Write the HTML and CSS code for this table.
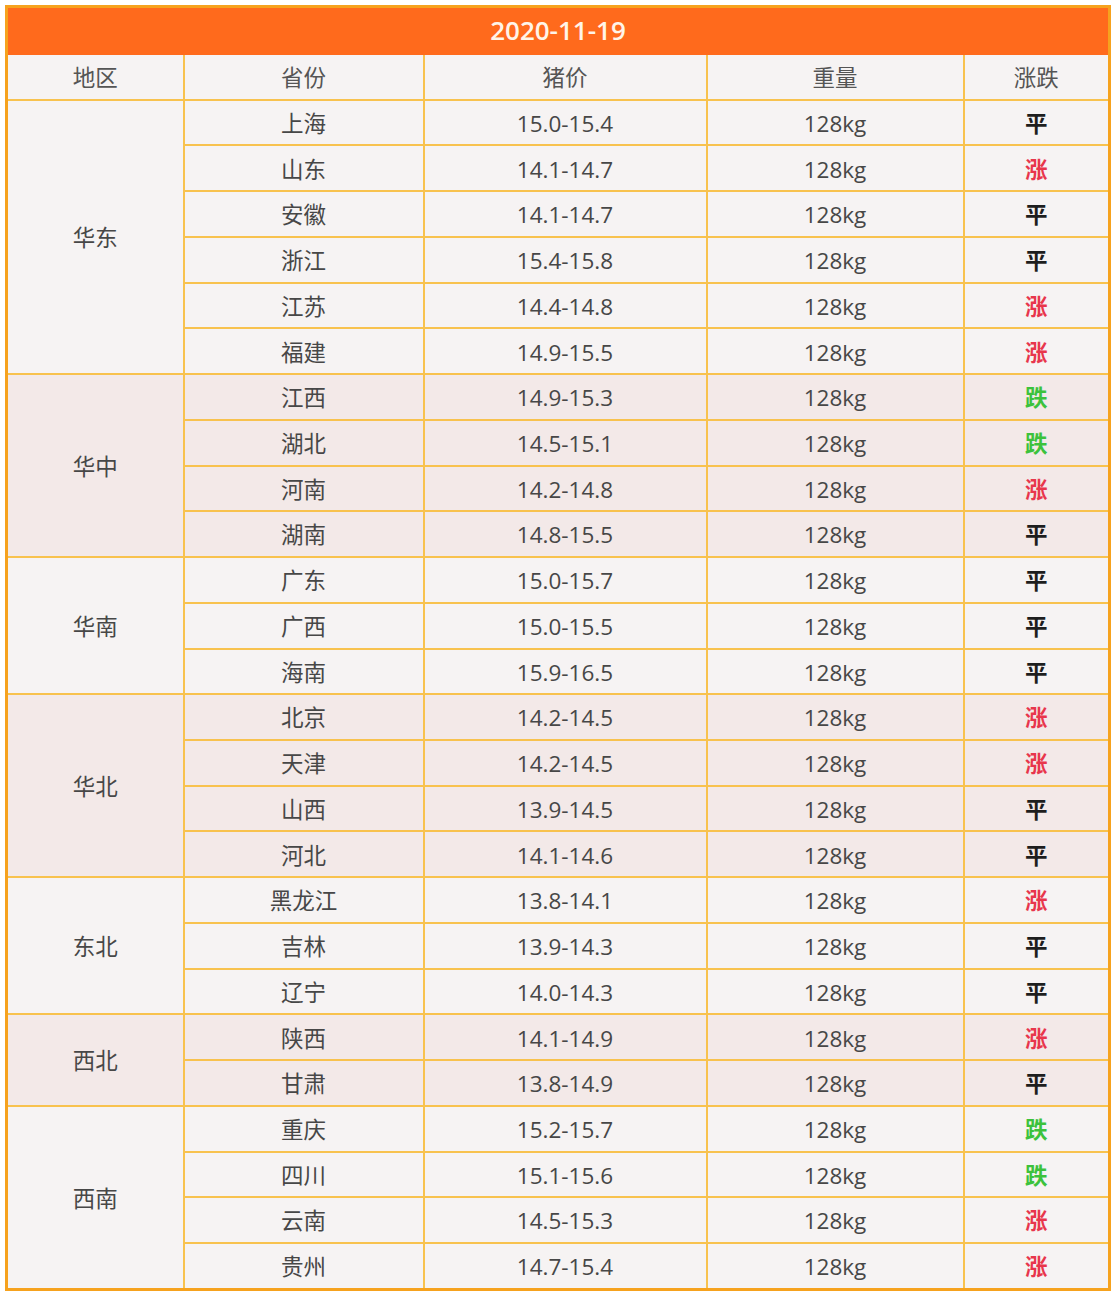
FILE: index.html
```html
<!DOCTYPE html>
<html lang="zh">
<head>
<meta charset="utf-8">
<link rel="stylesheet" href="styles.css">
</head>
<body>
<table class="price">
  <colgroup>
    <col class="c1"><col class="c2"><col class="c3"><col class="c4"><col class="c5">
  </colgroup>
  <thead>
    <tr class="title"><th colspan="5">2020-11-19</th></tr>
    <tr class="head"><th>地区</th><th>省份</th><th>猪价</th><th>重量</th><th>涨跌</th></tr>
  </thead>
  <tbody class="g-light">
    <tr><td rowspan="6">华东</td><td>上海</td><td>15.0-15.4</td><td>128kg</td><td class="flat">平</td></tr>
    <tr><td>山东</td><td>14.1-14.7</td><td>128kg</td><td class="up">涨</td></tr>
    <tr><td>安徽</td><td>14.1-14.7</td><td>128kg</td><td class="flat">平</td></tr>
    <tr><td>浙江</td><td>15.4-15.8</td><td>128kg</td><td class="flat">平</td></tr>
    <tr><td>江苏</td><td>14.4-14.8</td><td>128kg</td><td class="up">涨</td></tr>
    <tr><td>福建</td><td>14.9-15.5</td><td>128kg</td><td class="up">涨</td></tr>
  </tbody>
  <tbody class="g-pink">
    <tr><td rowspan="4">华中</td><td>江西</td><td>14.9-15.3</td><td>128kg</td><td class="down">跌</td></tr>
    <tr><td>湖北</td><td>14.5-15.1</td><td>128kg</td><td class="down">跌</td></tr>
    <tr><td>河南</td><td>14.2-14.8</td><td>128kg</td><td class="up">涨</td></tr>
    <tr><td>湖南</td><td>14.8-15.5</td><td>128kg</td><td class="flat">平</td></tr>
  </tbody>
  <tbody class="g-light">
    <tr><td rowspan="3">华南</td><td>广东</td><td>15.0-15.7</td><td>128kg</td><td class="flat">平</td></tr>
    <tr><td>广西</td><td>15.0-15.5</td><td>128kg</td><td class="flat">平</td></tr>
    <tr><td>海南</td><td>15.9-16.5</td><td>128kg</td><td class="flat">平</td></tr>
  </tbody>
  <tbody class="g-pink">
    <tr><td rowspan="4">华北</td><td>北京</td><td>14.2-14.5</td><td>128kg</td><td class="up">涨</td></tr>
    <tr><td>天津</td><td>14.2-14.5</td><td>128kg</td><td class="up">涨</td></tr>
    <tr><td>山西</td><td>13.9-14.5</td><td>128kg</td><td class="flat">平</td></tr>
    <tr><td>河北</td><td>14.1-14.6</td><td>128kg</td><td class="flat">平</td></tr>
  </tbody>
  <tbody class="g-light">
    <tr><td rowspan="3">东北</td><td>黑龙江</td><td>13.8-14.1</td><td>128kg</td><td class="up">涨</td></tr>
    <tr><td>吉林</td><td>13.9-14.3</td><td>128kg</td><td class="flat">平</td></tr>
    <tr><td>辽宁</td><td>14.0-14.3</td><td>128kg</td><td class="flat">平</td></tr>
  </tbody>
  <tbody class="g-pink">
    <tr><td rowspan="2">西北</td><td>陕西</td><td>14.1-14.9</td><td>128kg</td><td class="up">涨</td></tr>
    <tr><td>甘肃</td><td>13.8-14.9</td><td>128kg</td><td class="flat">平</td></tr>
  </tbody>
  <tbody class="g-light">
    <tr><td rowspan="4">西南</td><td>重庆</td><td>15.2-15.7</td><td>128kg</td><td class="down">跌</td></tr>
    <tr><td>四川</td><td>15.1-15.6</td><td>128kg</td><td class="down">跌</td></tr>
    <tr><td>云南</td><td>14.5-15.3</td><td>128kg</td><td class="up">涨</td></tr>
    <tr><td>贵州</td><td>14.7-15.4</td><td>128kg</td><td class="up">涨</td></tr>
  </tbody>
</table>
</body>
</html>
```
FILE: styles.css
```css
html, body {
  margin: 0;
  padding: 0;
  background: #ffffff;
}
body {
  padding: 5px 0 0 5px;
  font-family: "Open Sans", "Noto Sans CJK SC", sans-serif;
}
.price {
  border-collapse: collapse;
  table-layout: fixed;
  width: 1103px;
  border: 3px solid #f6a21e;
  color: #474747;
}
.c1 { width: 177px; }
.c2 { width: 240px; }
.c3 { width: 283px; }
.c4 { width: 257px; }
.c5 { width: 146px; }
.price th, .price td {
  border: 2px solid #f8c24e;
  text-align: center;
  vertical-align: middle;
  padding: 3px 0 0 0;
  font-size: 22.5px;
  font-weight: 400;
  height: 40.74px;
  line-height: 1;
}
.title th {
  background: #ff6a1c;
  color: #fff4e8;
  font-size: 26px;
  font-weight: 600;
  height: 43px;
  padding: 0 0 2px 0;
  border-color: #ff6a1c;
  border-top: 0;
}
.head th {
  background: #f6f3f3;
  color: #555;
}
.g-light td { background: #f6f3f3; }
.g-pink td { background: #f3e9e8; }
.price td.flat { color: #1e1e1e; font-weight: 700; }
.price td.up { color: #e8364c; font-weight: 700; }
.price td.down { color: #3cc23c; font-weight: 700; }
```
